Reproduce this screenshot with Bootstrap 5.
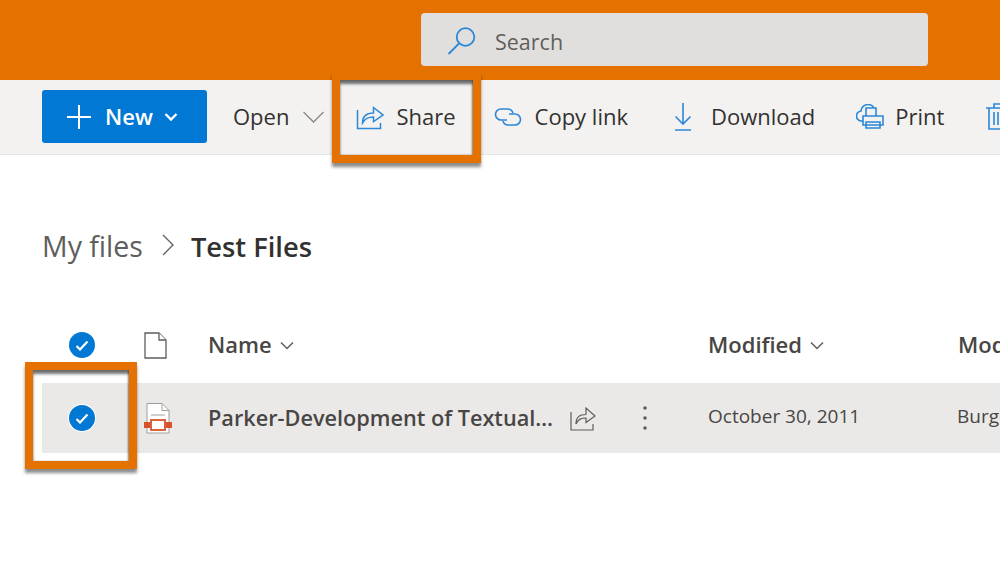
<!DOCTYPE html>
<html lang="en">
  <head>
    <meta charset="UTF-8" />
    <meta name="viewport" content="width=device-width, initial-scale=1.0" />
    <title>Test Files</title>
    <link
      href="https://cdn.jsdelivr.net/npm/bootstrap@5.3.5/dist/css/bootstrap.min.css"
      rel="stylesheet"
    />
    <style>
      body {
        background: #fff;
        color: #323130;
        font-family: "Open Sans", "Noto Sans", sans-serif;
        overflow: hidden;
        height: 563px;
        position: relative;
      }

      svg {
        flex: none;
        display: block;
      }

      .top-bar {
        background: #e57200;
        height: 80px;
        padding: 13px 0 0 421px;
      }

      .search-box {
        width: 507px;
        height: 53px;
        background: #e1dfdd;
        border-radius: 4px;
        padding: 5px 0 0 26px;
        gap: 18px;
        color: #605e5c;
        font-size: 21.5px;
      }

      .tool-bar {
        background: #f3f2f1;
        height: 75px;
        padding: 10px 0 0 42px;
        border-bottom: 1px solid #e8e6e4;
        font-size: 22px;
        white-space: nowrap;
        overflow: hidden;
      }

      .tool-bar > div {
        flex: none;
      }

      .new-btn {
        width: 165px;
        height: 53px;
        background: #0078d4;
        color: #fff;
        border-radius: 3px;
        font-weight: 600;
        padding-left: 25px;
      }

      .new-label {
        margin: 0 11px 0 14px;
      }

      .tool-item {
        height: 53px;
      }

      .open-tool {
        margin-left: 26px;
      }

      .open-caret {
        margin-left: 14px;
      }

      .share-tool {
        margin-left: 32px;
      }

      .link-tool {
        margin-left: 38px;
      }

      .download-tool {
        margin-left: 46px;
      }

      .print-tool {
        margin-left: 41px;
      }

      .delete-tool {
        margin-left: 42px;
      }

      .tool-label {
        margin-left: 12px;
      }

      .link-tool .tool-label {
        margin-left: 13px;
      }

      .download-tool .tool-label {
        margin-left: 19px;
      }

      .print-tool .tool-label {
        margin-left: 11px;
      }

      .crumbs {
        height: 161px;
        padding: 72px 0 0 42px;
        font-size: 27.3px;
        color: #605e5c;
      }

      .crumbs span {
        font-size: 28.5px;
        margin-top: -2px;
      }

      .crumbs b {
        font-weight: 600;
        color: #323130;
      }

      .crumb-sep {
        margin: 6px 16px 0 18px;
      }

      .file-head {
        height: 58px;
        margin: 0 0 9px 42px;
        font-size: 22px;
        font-weight: 600;
        color: #484644;
        white-space: nowrap;
      }

      .head-text {
        margin: -2px 0 0 -1px;
      }

      .file-row {
        height: 70px;
        background: #ebe9e8;
        margin-left: 42px;
        white-space: nowrap;
      }

      .file-head > div,
      .file-row > div {
        flex: none;
      }

      .col-check {
        width: 80px;
      }

      .col-type {
        width: 87px;
        padding-left: 22px;
      }

      .col-name {
        width: 500px;
      }

      .col-modified {
        width: 250px;
      }

      .file-name {
        font-size: 21.7px;
        font-weight: 600;
        width: 347px;
        margin: 0 15px 0 -1px;
        color: #484644;
      }

      .file-date,
      .file-by {
        font-size: 19px;
        color: #484644;
        margin: -3px 0 0 -1px;
      }

      .row-actions {
        width: 139px;
      }

      .row-more {
        margin-left: 46px;
      }

      .check-dot {
        width: 26px;
        height: 26px;
        border-radius: 50%;
        background: #0078d4;
        box-shadow: 0 0 0 1px #fff;
      }

      .call-out {
        position: absolute;
        border: 8px solid #e57200;
        box-shadow:
          0 4px 3px rgba(0, 0, 0, 0.45),
          inset 0 4px 3px rgba(0, 0, 0, 0.55),
          inset -1px 0 2px rgba(0, 0, 0, 0.3);
      }

      .call-share {
        left: 332px;
        top: 72px;
        width: 149px;
        height: 91px;
      }

      .call-check {
        left: 25px;
        top: 362px;
        width: 112px;
        height: 107px;
      }
    </style>
  </head>

  <body>
    <header class="top-bar">
      <div class="search-box d-flex align-items-center">
        <svg width="30" height="30" viewBox="0 0 30 30" fill="none" stroke="#2b88d8" stroke-width="1.8">
          <circle cx="18.5" cy="10" r="8.8" />
          <path d="M12 16.5 1.500 27" />
        </svg>
        <span>Search</span>
      </div>
    </header>

    <nav class="tool-bar d-flex align-items-start">
      <div class="new-btn d-flex align-items-center">
        <svg width="24" height="24" viewBox="0 0 24 24" stroke="#fff" stroke-width="2">
          <path d="M12 0v24M0 12h24" />
        </svg>
        <span class="new-label">New</span>
        <svg width="14" height="10" viewBox="0 0 14 10" fill="none" stroke="#fff" stroke-width="2.4">
          <path d="M1.5 2 7 7.5 12.5 2" />
        </svg>
      </div>

      <div class="tool-item open-tool d-flex align-items-center">
        <span>Open</span>
        <svg class="open-caret" width="21" height="12" viewBox="0 0 21 12" fill="none" stroke="#8a8886" stroke-width="1.3">
          <path d="M.5 1 10.500 11 20.500 1" />
        </svg>
      </div>

      <div class="tool-item share-tool d-flex align-items-center">
        <svg width="28" height="26" viewBox="0 0 28 26" fill="none" stroke="#2b88d8" stroke-width="1.5">
          <path d="M1.5 6v18.5h23V19" />
          <path d="M6.5 19c0-7 3.5-10 11-10V3.5L27 11l-9.500 6.500V13c-5 0-8 1-11 6Z" />
        </svg>
        <span class="tool-label">Share</span>
      </div>

      <div class="tool-item link-tool d-flex align-items-center">
        <svg width="28" height="20" viewBox="0 0 28 20" fill="none" stroke="#2b88d8" stroke-width="1.6">
          <path d="M13 13H7A5.500 5.500 0 0 1 7 2h7a5.500 5.500 0 0 1 5 4" />
          <path d="M15 7h6a5.500 5.500 0 0 1 0 11h-7a5.500 5.500 0 0 1-5-4" />
        </svg>
        <span class="tool-label">Copy link</span>
      </div>

      <div class="tool-item download-tool d-flex align-items-center">
        <svg width="18" height="28" viewBox="0 0 18 28" fill="none" stroke="#2b88d8" stroke-width="1.6">
          <path d="M9 0v21M1.500 13.500 9 21l7.500-7.500M1 27h16" />
        </svg>
        <span class="tool-label">Download</span>
      </div>

      <div class="tool-item print-tool d-flex align-items-center">
        <svg width="28" height="26" viewBox="0 0 28 26" fill="none" stroke="#2b88d8" stroke-width="1.6">
          <path d="M7 17H6A5 5 0 0 1 5 7a7 7 0 0 1 13-3" />
          <path d="M10 12V4h10v8M7 12h20v9H7zM10 18v6h14v-6z" />
        </svg>
        <span class="tool-label">Print</span>
      </div>

      <div class="tool-item delete-tool d-flex align-items-center">
        <svg width="24" height="27" viewBox="0 0 24 27" fill="none" stroke="#2b88d8" stroke-width="1.6">
          <path d="M0 5h24M8 5V1h8v4M3 5v21h18V5M8 9v13M12 9v13M16 9v13" />
        </svg>
      </div>
    </nav>

    <div class="crumbs d-flex align-items-start">
      <span>My files</span>
      <svg class="crumb-sep" width="14" height="24" viewBox="0 0 14 24" fill="none" stroke="#605e5c" stroke-width="1.3">
        <path d="M2 2 12 12 2 22" />
      </svg>
      <b>Test Files</b>
    </div>

    <div class="file-head d-flex align-items-center">
      <div class="col-check d-flex justify-content-center">
        <div class="check-dot d-flex align-items-center justify-content-center">
          <svg width="14" height="11" viewBox="0 0 14 11" fill="none" stroke="#fff" stroke-width="2.2">
            <path d="M1.500 6 5 9.500 12.500 1.500" />
          </svg>
        </div>
      </div>
      <div class="col-type">
        <svg width="23" height="27" viewBox="0 0 23 27" fill="#fff" stroke="#605e5c" stroke-width="1.3">
          <path d="M1 1h14l7 7v18H1z" />
          <path d="M15 1v7h7" />
        </svg>
      </div>
      <div class="col-name d-flex align-items-center">
        <span class="head-text">Name</span>
        <svg class="ms-2" width="14" height="9" viewBox="0 0 14 9" fill="none" stroke="#605e5c" stroke-width="1.5">
          <path d="M1 1.500 7 7.500 13 1.500" />
        </svg>
      </div>
      <div class="col-modified d-flex align-items-center">
        <span class="head-text">Modified</span>
        <svg class="ms-2" width="14" height="9" viewBox="0 0 14 9" fill="none" stroke="#605e5c" stroke-width="1.5">
          <path d="M1 1.500 7 7.500 13 1.500" />
        </svg>
      </div>
      <div class="head-text">Modified By</div>
    </div>

    <div class="file-row d-flex align-items-center">
      <div class="col-check d-flex justify-content-center">
        <div class="check-dot d-flex align-items-center justify-content-center">
          <svg width="14" height="11" viewBox="0 0 14 11" fill="none" stroke="#fff" stroke-width="2.2">
            <path d="M1.500 6 5 9.500 12.500 1.500" />
          </svg>
        </div>
      </div>
      <div class="col-type">
        <svg width="28" height="31" viewBox="0 0 28 31" fill="none">
          <path d="M3 .5h15l7 7v22.500H3z" fill="#fff" stroke="#a19f9d" stroke-width="1" />
          <path d="M18 .5v7h7M7 12h14" stroke="#a19f9d" stroke-width="1" />
          <rect x="0" y="19" width="6" height="6" fill="#d8532c" />
          <rect x="22" y="19" width="6" height="6" fill="#d8532c" />
          <rect x="7" y="17" width="14" height="10" fill="#fff" stroke="#d8532c" stroke-width="1.800" />
        </svg>
      </div>
      <div class="file-name text-truncate">Parker-Development of Textual Analysis</div>
      <div class="row-actions d-flex align-items-center">
        <svg width="27" height="25" viewBox="0 0 27 25" fill="none" stroke="#605e5c" stroke-width="1.200">
          <path d="M1 6v18h22v-6" />
          <path d="M6 18c0-7 3.500-9.500 10-9.500V2l9 8-9 6.500V12c-5 0-7.500 1-10 6Z" />
        </svg>
        <svg class="row-more" width="4" height="24" viewBox="0 0 4 24" fill="#605e5c">
          <circle cx="2" cy="2" r="1.800" />
          <circle cx="2" cy="12" r="1.800" />
          <circle cx="2" cy="22" r="1.800" />
        </svg>
      </div>
      <div class="file-date col-modified">October 30, 2011</div>
      <div class="file-by">Burgess</div>
    </div>

    <div class="call-out call-share"></div>
    <div class="call-out call-check"></div>

    <script src="https://cdn.jsdelivr.net/npm/bootstrap@5.3.5/dist/js/bootstrap.bundle.min.js"></script>
  </body>
</html>
